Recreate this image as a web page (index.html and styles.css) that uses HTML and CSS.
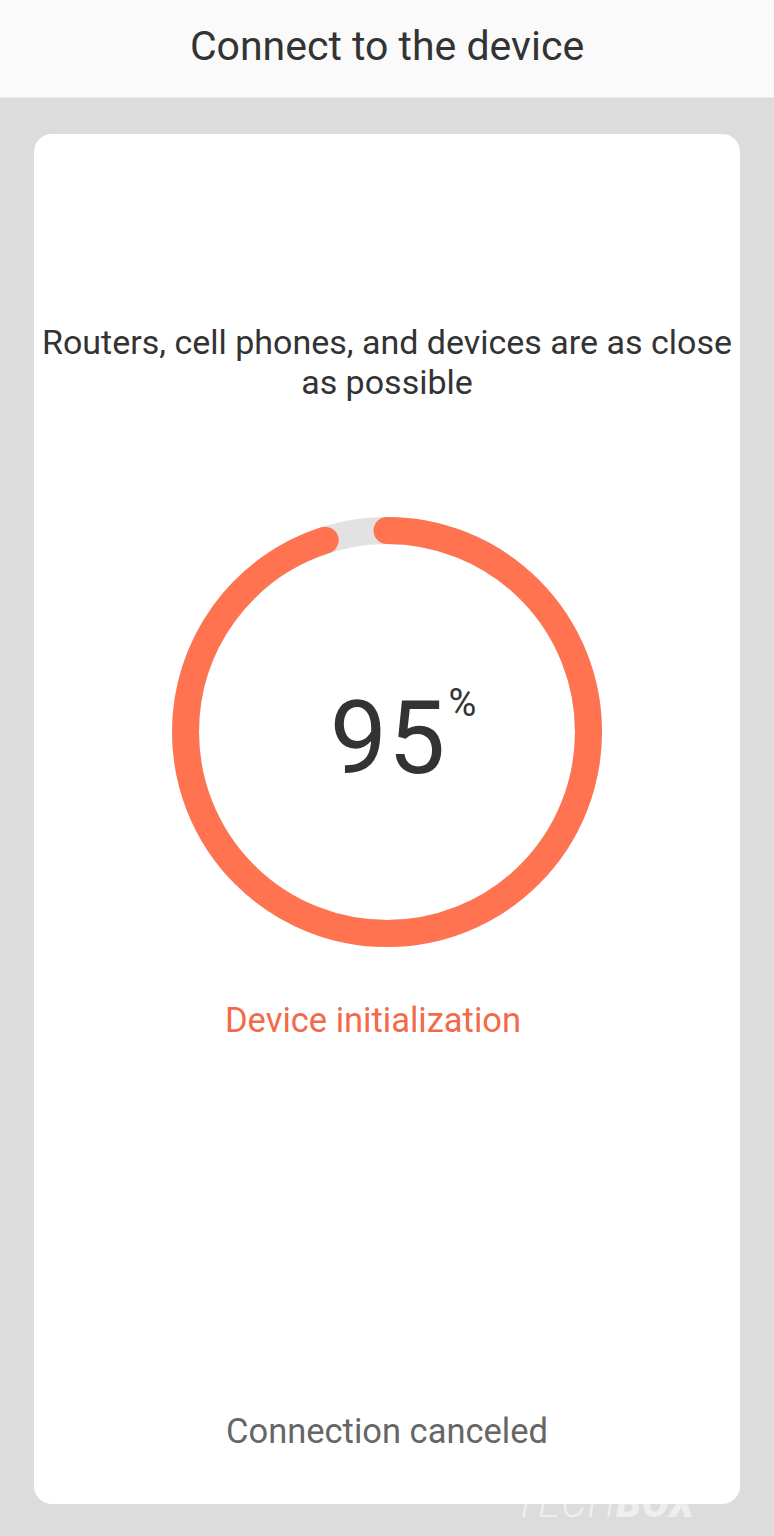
FILE: index.html
```html
<!DOCTYPE html>
<html lang="en">
<head>
  <meta charset="UTF-8" />
  <meta name="viewport" content="width=device-width, initial-scale=1.0" />
  <title>Connect to the device</title>
  <link rel="stylesheet" href="styles.css">
</head>
<body>
  <div class="header">
    <h1>Connect to the device</h1>
  </div>

  <div class="container">
    <div class="card">
      <p class="hint">Routers, cell phones, and devices are as close as possible</p>

      <div class="progress">
        <svg class="ring" viewBox="0 0 430 430">
          <circle class="ring-track" cx="215" cy="215" r="201.5"></circle>
          <!-- 95% of 2*pi*201.5 = 1266.04 -->
          <circle class="ring-bar" cx="215" cy="215" r="201.5"
                  stroke-dasharray="1202.7 1266.04"
                  transform="rotate(-90 215 215)"></circle>
        </svg>
        <div class="percent">
          <span class="value">95</span>
          <span class="unit">%</span>
        </div>
      </div>

      <div class="status">Device initialization</div>

      <button class="cancel">Connection canceled</button>
    </div>
  </div>

  <div class="watermark"><span class="wm-light">Tech</span><span class="wm-bold">BOX</span></div>
</body>
</html>
```

FILE: styles.css
```css
:root {
  --bg-color: #dcdcdc;
  --header-bg: #fafafa;
  --card-bg: #ffffff;
  --text-color: #333333;
  --muted-color: #666666;
  --accent: #ff7350;
  --accent-text: #f26a49;
  --track: #e2e2e2;
}

body {
  font-family: Roboto, "Noto Sans", "Liberation Sans", sans-serif;
  margin: 0;
  padding: 0;
  background-color: var(--bg-color);
  color: var(--text-color);
  min-height: 1536px;
  position: relative;
}

.header {
  height: 98px;
  display: flex;
  align-items: center;
  justify-content: center;
  background-color: var(--header-bg);
  box-sizing: border-box;
  border-bottom: 1px solid #e8e8e8;
}

h1 {
  margin: 0;
  font-size: 41px;
  font-weight: 400;
  color: var(--text-color);
  padding-bottom: 6px;
}

.container {
  padding: 36px 34px 0;
}

.card {
  height: 1370px;
  background-color: var(--card-bg);
  border-radius: 18px;
  display: flex;
  flex-direction: column;
  align-items: center;
  padding: 188px 0 53px;
  box-sizing: border-box;
}

.hint {
  margin: 0;
  font-size: 34px;
  line-height: 40px;
  text-align: center;
  color: var(--text-color);
}

.progress {
  margin-top: 115px;
  display: grid;
  width: 430px;
  height: 430px;
}

.progress > * {
  grid-area: 1 / 1;
}

.ring {
  width: 430px;
  height: 430px;
}

.ring circle {
  fill: none;
  stroke-width: 27;
}

.ring-track {
  stroke: var(--track);
}

.ring-bar {
  stroke: var(--accent);
  stroke-linecap: round;
}

.percent {
  display: flex;
  align-items: flex-start;
  justify-content: center;
  align-self: center;
  margin-left: 32px;
  margin-top: 12px;
}

.value {
  font-size: 102px;
  line-height: 102px;
  letter-spacing: 1px;
}

.unit {
  font-size: 38px;
  line-height: 38px;
  margin-left: 2px;
  margin-top: -3px;
}

.status {
  margin-top: 53px;
  margin-right: 28px;
  font-size: 34.5px;
  line-height: 40px;
  color: var(--accent-text);
}

.cancel {
  margin-top: auto;
  background: none;
  border: none;
  padding: 0;
  font-family: inherit;
  font-size: 34.5px;
  line-height: 40px;
  color: var(--muted-color);
  cursor: pointer;
}

.watermark {
  position: absolute;
  left: 514px;
  top: 1480px;
  font-size: 40px;
  font-style: italic;
  letter-spacing: 1px;
  color: rgba(255, 255, 255, 0.55);
  text-transform: uppercase;
  pointer-events: none;
}

.wm-light {
  font-weight: 300;
}

.wm-bold {
  font-weight: 900;
}
```
